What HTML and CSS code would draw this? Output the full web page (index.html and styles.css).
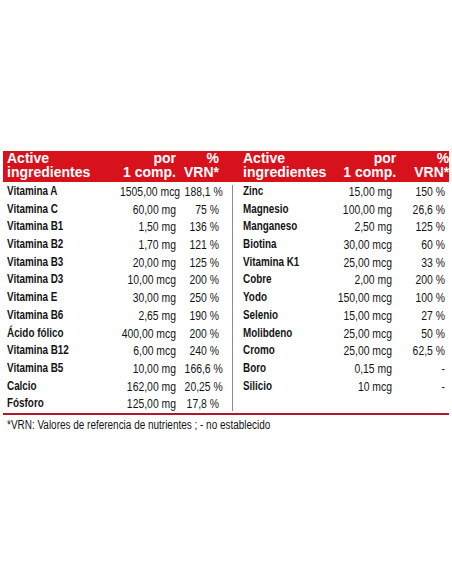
FILE: index.html
```html
<!DOCTYPE html>
<html lang="es">

<head>
  <meta charset="UTF-8" />
  <meta name="viewport" content="width=device-width, initial-scale=1.0" />
  <title>Composición por comprimido</title>
  <link rel="stylesheet" href="styles.css">
</head>

<body>
  <section class="sheet">
    <div class="halves">
      <div class="half left">
        <div class="cols head">
          <div>Active<br>ingredientes</div>
          <div class="num">por<br>1 comp.</div>
          <div class="num">%<br>VRN*</div>
        </div>
        <div class="cols rows">
          <div class="name">Vitamina A</div><div class="num">1505,00 mcg</div><div class="num">188,1 %</div>
          <div class="name">Vitamina C</div><div class="num">60,00 mg</div><div class="num">75 %</div>
          <div class="name">Vitamina B1</div><div class="num">1,50 mg</div><div class="num">136 %</div>
          <div class="name">Vitamina B2</div><div class="num">1,70 mg</div><div class="num">121 %</div>
          <div class="name">Vitamina B3</div><div class="num">20,00 mg</div><div class="num">125 %</div>
          <div class="name">Vitamina D3</div><div class="num">10,00 mcg</div><div class="num">200 %</div>
          <div class="name">Vitamina E</div><div class="num">30,00 mg</div><div class="num">250 %</div>
          <div class="name">Vitamina B6</div><div class="num">2,65 mg</div><div class="num">190 %</div>
          <div class="name">Ácido fólico</div><div class="num">400,00 mcg</div><div class="num">200 %</div>
          <div class="name">Vitamina B12</div><div class="num">6,00 mcg</div><div class="num">240 %</div>
          <div class="name">Vitamina B5</div><div class="num">10,00 mg</div><div class="num">166,6 %</div>
          <div class="name">Calcio</div><div class="num">162,00 mg</div><div class="num">20,25 %</div>
          <div class="name">Fósforo</div><div class="num">125,00 mg</div><div class="num">17,8 %</div>
        </div>
      </div>

      <div class="half right">
        <div class="cols head">
          <div>Active<br>ingredientes</div>
          <div class="num">por<br>1 comp.</div>
          <div class="num">%<br>VRN*</div>
        </div>
        <div class="cols rows">
          <div class="name">Zinc</div><div class="num">15,00 mg</div><div class="num">150 %</div>
          <div class="name">Magnesio</div><div class="num">100,00 mg</div><div class="num">26,6 %</div>
          <div class="name">Manganeso</div><div class="num">2,50 mg</div><div class="num">125 %</div>
          <div class="name">Biotina</div><div class="num">30,00 mcg</div><div class="num">60 %</div>
          <div class="name">Vitamina K1</div><div class="num">25,00 mcg</div><div class="num">33 %</div>
          <div class="name">Cobre</div><div class="num">2,00 mg</div><div class="num">200 %</div>
          <div class="name">Yodo</div><div class="num">150,00 mcg</div><div class="num">100 %</div>
          <div class="name">Selenio</div><div class="num">15,00 mcg</div><div class="num">27 %</div>
          <div class="name">Molibdeno</div><div class="num">25,00 mcg</div><div class="num">50 %</div>
          <div class="name">Cromo</div><div class="num">25,00 mcg</div><div class="num">62,5 %</div>
          <div class="name">Boro</div><div class="num">0,15 mg</div><div class="num">-</div>
          <div class="name">Silicio</div><div class="num">10 mcg</div><div class="num">-</div>
        </div>
      </div>
    </div>

    <div class="rule"></div>
    <p class="note">*VRN: Valores de referencia de nutrientes ; - no establecido</p>
  </section>
</body>

</html>
```

FILE: styles.css
```css
/* Base */
body {
  margin: 0;
  background: #fff;
  color: #141414;
  font-family: 'Liberation Sans', Arial, sans-serif;
}

/* Sheet */
.sheet {
  width: 446px;
  margin: 151px 0 0 3px;
}

.halves {
  display: flex;
  align-items: stretch;
}

.half {
  display: flex;
  flex-direction: column;
}

.half.left {
  width: 229px;
}

.half.right {
  width: 217px;
}

/* Column grids */
.cols {
  display: grid;
}

.left .cols {
  grid-template-columns: 1fr 70px 43px;
  padding: 0 13px 0 4px;
}

.right .cols {
  grid-template-columns: 1fr 70px 53px;
  padding: 0 4px 0 11px;
}

.num {
  text-align: right;
  white-space: nowrap;
}

/* Red header */
.head {
  background-color: #d8121d;
  color: #fff;
  height: 31px;
  box-sizing: border-box;
  padding-top: 2px;
  font-weight: bold;
  font-size: 14px;
  line-height: 14px;
}

/* Body rows (narrow type, like Arial Narrow) */
.rows {
  flex: 1;
  position: relative;
  grid-auto-rows: 17.7px;
  align-content: start;
  align-items: center;
  padding-top: 1px !important;
  line-height: 17.7px;
}

.rows > div {
  white-space: nowrap;
}

.rows .name {
  font-weight: bold;
  font-size: 12.5px;
  transform: scaleX(0.79);
  transform-origin: left center;
}

.rows .num {
  font-size: 13px;
  transform: scaleX(0.8);
  transform-origin: right center;
}

.right .rows::before {
  content: "";
  position: absolute;
  left: 0;
  top: 3px;
  bottom: 2px;
  border-left: 1.5px solid #8c8c8c;
}

/* Footer */
.rule {
  height: 2px;
  background-color: #b3162f;
}

.note {
  margin: 3px 0 0 4px;
  font-size: 12px;
  line-height: 15px;
  white-space: nowrap;
  transform: scaleX(0.83);
  transform-origin: left center;
}
```
